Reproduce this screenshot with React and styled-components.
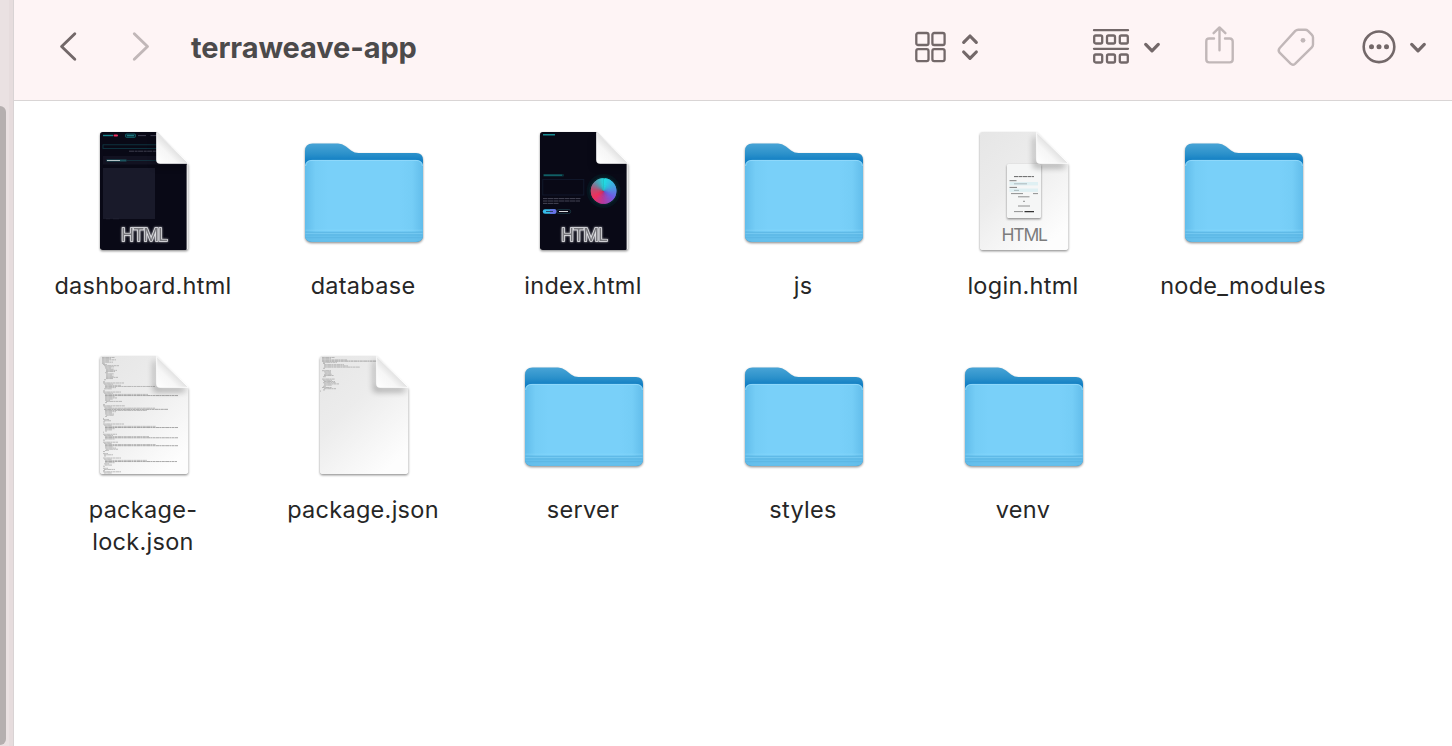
import React from "react";
import styled, { createGlobalStyle } from "styled-components";

const GlobalStyle = createGlobalStyle`
  * { box-sizing: border-box; }
  body { margin: 0; background: #fff; font-family: Inter, "Liberation Sans", sans-serif; }
`;

const Window = styled.div`
  display: flex;
  width: 100%;
  height: 746px;
  overflow: hidden;
  background: #fff;
`;

const SidebarEdge = styled.aside`
  flex: none;
  width: 14px;
  padding-top: 106px;
  background: linear-gradient(90deg, #eae1e2 0 9px, #e6dcdd 9px 13px, #d9d3d4 13px);
`;

const ScrollThumb = styled.div`
  width: 6px;
  height: 639px;
  background: #b5afaf;
  border-radius: 0 6px 6px 0;
`;

const Main = styled.main`
  flex: 1;
  min-width: 0;
  display: flex;
  flex-direction: column;
`;

const Toolbar = styled.header`
  flex: none;
  display: flex;
  align-items: center;
  height: 101px;
  padding: 0 26px 6px 43px;
  background: #fef4f5;
  border-bottom: 1px solid #d9d5d5;
`;

const ToolButton = styled.button`
  flex: none;
  display: flex;
  padding: 0;
  border: 0;
  background: none;
  margin-left: ${(p) => p.$gap || 0}px;
  color: ${(p) => (p.$disabled ? "#c1b7b8" : "#736869")};
`;

const Glyph = styled.svg`
  display: block;
  overflow: visible;
  fill: none;
  stroke: currentColor;
  stroke-width: ${(p) => p.$weight || 2.5};
  stroke-linecap: round;
  stroke-linejoin: round;
`;

const Title = styled.h1`
  flex: 1;
  margin: 1px 0 0 40px;
  font-size: 29px;
  line-height: 40px;
  font-weight: 700;
  letter-spacing: -0.1px;
  color: #4c4a4b;
`;

const Grid = styled.section`
  display: grid;
  grid-template-columns: repeat(6, 220px);
  grid-auto-rows: 224px;
  padding: 25px 0 0 19px;
`;

const Item = styled.figure`
  display: flex;
  flex-direction: column;
  align-items: center;
  margin: 0;
`;

const IconArt = styled.svg`
  display: block;
  width: 126px;
  height: 128px;
  overflow: visible;
`;

const Label = styled.figcaption`
  max-width: 190px;
  margin-top: 16px;
  font-size: 23.5px;
  line-height: 32px;
  letter-spacing: 0.28px;
  text-align: center;
  color: #262626;
`;

const Badge = styled.text`
  font-family: Inter, "Liberation Sans", sans-serif;
  font-size: 17.5px;
  fill: ${(p) => (p.$glow ? "#77777c" : "#7c7c7c")};
  stroke: ${(p) => (p.$glow ? "#e6e6ea" : "none")};
  stroke-width: 1.4px;
  paint-order: stroke;
  filter: ${(p) => (p.$glow ? "drop-shadow(0 0 1px #c8c8cc)" : "none")};
`;

const Chevron = () => (
  <Glyph width="16" height="10" $weight={3.2}>
    <path d="M1.7 2.4 8 8.8 14.3 2.4" />
  </Glyph>
);

function Defs() {
  return (
    <svg width="0" height="0" style={{ display: "block" }}>
      <defs>
        <linearGradient id="back" x1="0" y1="0" x2="0" y2="1">
          <stop offset="0" stopColor="#48a4d6" />
          <stop offset="0.1" stopColor="#2d92cb" />
          <stop offset="0.17" stopColor="#1480c4" />
          <stop offset="1" stopColor="#1480c4" />
        </linearGradient>
        <linearGradient id="front" x1="0" y1="0" x2="1" y2="0">
          <stop offset="0" stopColor="#62bdeb" />
          <stop offset="0.09" stopColor="#75cdf6" />
          <stop offset="0.2" stopColor="#79d0f9" />
          <stop offset="0.8" stopColor="#79d0f9" />
          <stop offset="0.91" stopColor="#75cdf6" />
          <stop offset="1" stopColor="#62bdeb" />
        </linearGradient>
        <linearGradient id="paper" x1="0" y1="0" x2="0.7" y2="1">
          <stop offset="0" stopColor="#e6e6e6" />
          <stop offset="0.45" stopColor="#ececec" />
          <stop offset="1" stopColor="#fdfdfd" />
        </linearGradient>
        <linearGradient id="curl" x1="0" y1="1" x2="0.55" y2="0.45">
          <stop offset="0" stopColor="#ffffff" />
          <stop offset="0.6" stopColor="#f6f6f6" />
          <stop offset="1" stopColor="#dcdcdc" />
        </linearGradient>
        <filter id="drop" x="-10%" y="-10%" width="120%" height="125%" colorInterpolationFilters="sRGB">
          <feDropShadow dx="0" dy="1.2" stdDeviation="1.3" floodColor="#000" floodOpacity="0.45" />
        </filter>
        <filter id="soft" x="-40%" y="-40%" width="180%" height="180%">
          <feGaussianBlur stdDeviation="3" />
        </filter>
        <clipPath id="sheet">
          <path d="M23 6H76.5L108 38V121.3Q108 124 105.3 124H22.7Q20 124 20 121.3V8.7Q20 6 22.7 6Z" />
        </clipPath>
      </defs>
    </svg>
  );
}

function FolderIcon() {
  return (
    <IconArt viewBox="0 0 126 128">
      <g filter="url(#drop)">
        <path fill="url(#back)" d="M5 25Q5 17.5 12.5 17.5H38Q42 17.5 46 20.5L51 24.4Q54.5 27 58.5 27H116Q123 27 123 34V108.5Q123 115.8 116 115.8H12Q5 115.8 5 108.5Z" />
        <path fill="url(#front)" d="M5 41Q5 34 12 34H116Q123 34 123 41V108.5Q123 115.8 116 115.8H12Q5 115.8 5 108.5Z" />
      </g>
      <path fill="#62bce9" d="M5 106H123V108.5Q123 115.8 116 115.8H12Q5 115.8 5 108.5Z" opacity="0.8" />
      <path stroke="#58b3e2" strokeWidth="0.9" opacity="0.8" d="M5.5 106.2H122.5M5.5 109H122.5M6 111.7H122" />
      <path stroke="#8fd9fa" strokeWidth="0.8" opacity="0.5" d="M5.5 104.2H122.5M5.5 107.4H122.5" />
      <path fill="none" stroke="#93d9fa" strokeWidth="0.9" d="M5.6 40Q6 34.4 12 34.4H116Q122 34.4 122.4 40" />
    </IconArt>
  );
}

function Sheet({ fill, dark, children }) {
  return (
    <IconArt viewBox="0 0 126 128">
      <path filter="url(#drop)" fill={dark ? "#e8e8e8" : "#f4f4f4"} d="M23 6H76.5L108.3 38V121.3Q108.3 124 105.6 124H22.7Q20 124 20 121.3V8.7Q20 6 22.7 6Z" />
      <g clipPath="url(#sheet)">
        <rect x="20" y="6" width={dark ? 86.6 : 89} height="118" fill={fill} />
        {children}
        <path d="M76 10V38H106L104 41H74V12Z" fill="#000" opacity={dark ? 0.4 : 0.5} filter="url(#soft)" />
      </g>
      <path d="M76.7 6.3 108.3 37.3H79.4Q76.7 37.3 76.7 34.6Z" fill="url(#curl)" stroke="#fff" strokeWidth="0.9" />
    </IconArt>
  );
}

function DashboardIcon() {
  return (
    <Sheet fill="#090916" dark>
      <rect x="23" y="8.8" width="10" height="1.4" fill="#17848c" />
      <rect x="33.5" y="8.4" width="4.5" height="2.2" rx="1" fill="#ee3160" />
      <rect x="45.5" y="8" width="10" height="3.4" rx="1" fill="#0b2832" stroke="#167580" strokeWidth="0.7" />
      <path d="M47 9.7h7" stroke="#2aa2ab" strokeWidth="0.8" />
      <path d="M58 9.6h8M70.5 9.6h6" stroke="#484859" strokeWidth="0.9" />
      <rect x="23" y="18.8" width="60" height="3.6" fill="none" stroke="#103c48" strokeWidth="0.8" />
      <path d="M49 25.2h28" stroke="#464657" strokeWidth="0.9" strokeDasharray="5 .6 3 .5" />
      <rect x="23" y="30" width="84" height="8.5" fill="#121221" />
      <path d="M26.5 34.5H46.5" stroke="#1a545e" strokeWidth="2" />
      <path d="M27 34.5h13" stroke="#c6d0d2" strokeWidth="0.9" />
      <path d="M47 34.5h33" stroke="#12424d" strokeWidth="0.6" />
      <rect x="23" y="42" width="52" height="51" fill="#191a2a" />
      <path d="M26 92.8h4M33 92.8h6" stroke="#292939" strokeWidth="0.6" />
      <Badge $glow x="41" y="114.7" textLength="47">HTML</Badge>
    </Sheet>
  );
}

function wheelPoint(angle) {
  const a = (angle * Math.PI) / 180;
  return `${83.6 + 12.8 * Math.sin(a)} ${65 - 12.8 * Math.cos(a)}`;
}

const wheelStops = [
  [0, [31, 222, 226]],
  [60, [66, 166, 224]],
  [120, [112, 92, 228]],
  [180, [180, 58, 158]],
  [235, [240, 48, 92]],
  [275, [190, 76, 112]],
  [315, [90, 150, 172]],
  [360, [31, 222, 226]],
];

function wheelColor(angle) {
  const i = wheelStops.findIndex(([a]) => a > angle);
  const [a0, c0] = wheelStops[i - 1];
  const [a1, c1] = wheelStops[i];
  const t = (angle - a0) / (a1 - a0);
  return `rgb(${c0.map((c, k) => Math.round(c + (c1[k] - c) * t)).join(",")})`;
}

function LandingIcon() {
  return (
    <Sheet fill="#090916" dark>
      <path d="M23 8.8h12" stroke="#178b91" strokeWidth="1.6" />
      <rect x="23" y="48" width="21" height="2.4" rx="1" fill="#0b3038" />
      <path d="M24 49.2h18" stroke="#15747b" strokeWidth="1" />
      <rect x="22.8" y="53.5" width="41" height="15.5" fill="none" stroke="#121a2d" strokeWidth="0.9" />
      <path d="M23 72.6h38M23 75h37M23 77.4h16" stroke="#4c4c5b" strokeWidth="0.9" strokeDasharray="4 .5 6 .5" />
      <rect x="22.8" y="83.3" width="13.5" height="4.4" rx="2.2" fill="#37bce9" />
      <path d="M30 83.3h4.5a2.2 2.2 0 0 1 0 4.4H30z" fill="#6a70e8" />
      <path d="M26 85.5h7" stroke="#22405b" strokeWidth="0.9" />
      <rect x="36.7" y="83.5" width="14" height="4" rx="2" fill="none" stroke="#1c3b46" strokeWidth="0.8" />
      <path d="M39 85.5h9" stroke="#d7dadd" strokeWidth="1" />
      <circle cx="83.6" cy="65" r="17" fill="#06141e" />
      <circle cx="83.6" cy="65" r="14.5" fill="#082029" />
      {Array.from({ length: 60 }, (_, i) => (
        <path
          key={i}
          fill={wheelColor(i * 6)}
          d={`M83.6 65 L${wheelPoint(i * 6)} A12.8 12.8 0 0 1 ${wheelPoint(Math.min(i * 6 + 12, 360))}Z`}
        />
      ))}
      <Badge $glow x="41" y="114.7" textLength="47">HTML</Badge>
    </Sheet>
  );
}

function LoginIcon() {
  return (
    <Sheet fill="url(#paper)">
      <g transform="translate(20 0)">
        <rect x="27" y="38" width="34" height="54" rx="1.5" fill="#f5f6f6" filter="url(#drop)" />
        <rect x="29.5" y="56" width="28.5" height="3.4" fill="#dff0f3" />
        <rect x="29.5" y="62.5" width="28.5" height="3.4" fill="#dff0f3" />
        <path d="M34 50.6h20" stroke="#666" strokeWidth="1" strokeDasharray="4 .5" />
        <path d="M29.5 54.7h7M29.5 61.4h7.5" stroke="#707070" strokeWidth="0.9" />
        <path d="M34 57.8h13M34 64.4h5" stroke="#9eabad" strokeWidth="0.8" />
        <path d="M31 67.6h12M53 67.6h5M38 70.8h11.5M43 75.3h2M38 80h12M34 85.6h9" stroke="#858585" strokeWidth="0.9" />
        <path d="M44.5 85.6h9.5" stroke="#333" strokeWidth="1.1" />
      </g>
      <Badge x="41.5" y="114.7" textLength="46.5">HTML</Badge>
    </Sheet>
  );
}

const codeBlocks = [
  [[2, 13], [2, 9], [2, 14], [2, 7], [2, 11], [2, 3], [3, 4], [4, 15], [5, 9], [5, 6], [6, 8], [6, 11], [6, 9], [5, 3], [6, 8], [6, 6], [6, 8], [6, 12], [6, 7], [4, 2]],
  [[3, 2], [3, 21], [4, 9], [5, 16], [5, 50], [5, 11], [4, 8]],
  [[3, 2], [3, 18], [4, 9], [5, 43], [5, 73], [5, 10], [5, 12], [5, 8], [5, 5], [6, 16], [5, 2]],
  [[3, 2], [3, 22], [4, 8], [5, 50], [4, 64], [5, 42], [5, 11], [5, 7], [5, 9], [6, 8], [5, 2]],
  [[3, 1], [3, 6], [4, 7], [3, 2]],
  [[3, 21], [4, 8], [5, 51], [5, 73], [5, 10], [5, 7], [5, 2], [3, 1]],
  [[3, 14], [4, 9], [5, 44], [5, 73], [5, 10], [3, 2]],
  [[3, 15], [4, 8], [5, 51], [5, 73], [5, 8], [5, 11], [6, 12], [5, 4], [3, 2]],
  [[3, 5], [4, 9], [4, 2]],
  [[3, 18], [4, 8], [5, 42], [5, 72], [5, 10], [4, 5], [5, 7], [3, 2]],
  [[3, 5], [4, 11], [3, 2], [3, 18], [4, 8]],
];

const manifestBlocks = [
  [[2, 13], [2, 9], [2, 25], [2, 66], [3, 14], [3, 2], [4, 20], [4, 24], [4, 36], [3, 2]],
  [[2, 9], [4, 7], [5, 6], [4, 8], [4, 10], [3, 3]],
  [[2, 13], [3, 9], [4, 11], [3, 13], [4, 15], [4, 8], [3, 3], [2, 10], [4, 12], [3, 2], [0, 1]],
];

function CodeLines({ blocks, step = 1.17, gap = 0.9 }) {
  let y = 7.5;
  const out = [];
  blocks.forEach((block, b) => {
    block.forEach(([indent, len], i) => {
      out.push(
        <path
          key={`${b}-${i}`}
          d={`M${20 + indent} ${y.toFixed(2)}h${len}`}
          stroke={len > 60 ? "#858585" : "#a4a4a4"}
          strokeWidth="0.7"
          strokeDasharray="2.8 .4 4 .3 1.6 .4"
        />
      );
      y += step;
    });
    y += gap;
  });
  return <g>{out}</g>;
}

const LockIcon = () => (
  <Sheet fill="url(#paper)">
    <CodeLines blocks={codeBlocks} />
  </Sheet>
);

const ManifestIcon = () => (
  <Sheet fill="url(#paper)">
    <CodeLines blocks={manifestBlocks} step={1.2} gap={1.2} />
  </Sheet>
);

const files = [
  ["dashboard.html", DashboardIcon],
  ["database", FolderIcon],
  ["index.html", LandingIcon],
  ["js", FolderIcon],
  ["login.html", LoginIcon],
  ["node_modules", FolderIcon],
  ["package-lock.json", LockIcon],
  ["package.json", ManifestIcon],
  ["server", FolderIcon],
  ["styles", FolderIcon],
  ["venv", FolderIcon],
];

export default function App() {
  return (
    <>
      <GlobalStyle />
      <Defs />
      <Window>
        <SidebarEdge>
          <ScrollThumb />
        </SidebarEdge>
        <Main>
          <Toolbar>
            <ToolButton $gap={3} aria-label="Back">
              <Glyph width="16" height="30" $weight={2.9}>
                <path d="M14.8 1.7 1.6 14.5 14.8 27.3" />
              </Glyph>
            </ToolButton>
            <ToolButton $gap={57} $disabled aria-label="Forward">
              <Glyph width="18" height="30" $weight={2.9}>
                <path d="M1.3 1.7 14.5 14.5 1.3 27.3" />
              </Glyph>
            </ToolButton>
            <Title>terraweave-app</Title>
            <ToolButton aria-label="View as icons">
              <Glyph width="31" height="31" $weight={2.3}>
                <rect x="1.3" y="1" width="12.2" height="12" rx="1.8" />
                <rect x="17.4" y="1" width="12.2" height="12" rx="1.8" />
                <rect x="1.3" y="17.1" width="12.2" height="12" rx="1.8" />
                <rect x="17.4" y="17.1" width="12.2" height="12" rx="1.8" />
              </Glyph>
            </ToolButton>
            <ToolButton $gap={15.5} aria-label="Change view">
              <Glyph width="16" height="28" $weight={3.2}>
                <path d="M1.7 9.4 8 3 14.3 9.4M1.7 19 8 25.4 14.3 19" />
              </Glyph>
            </ToolButton>
            <ToolButton $gap={115} aria-label="Group">
              <Glyph width="36" height="36" $weight={2.3}>
                <path d="M1 1.2H35M1 19.8H35" />
                {[1.2, 14, 26.8].map((x) => (
                  <g key={x}>
                    <rect x={x} y="6.5" width="8" height="8" rx="1.5" />
                    <rect x={x} y="25.5" width="8" height="8" rx="1.5" />
                  </g>
                ))}
              </Glyph>
            </ToolButton>
            <ToolButton $gap={15} aria-label="Group options">
              <Chevron />
            </ToolButton>
            <ToolButton $gap={45} $disabled aria-label="Share">
              <Glyph width="29" height="40" $weight={2.4}>
                <path d="M9 11.5H4.2Q1.3 11.5 1.3 14.4V32.5Q1.3 35.4 4.2 35.4H24.8Q27.7 35.4 27.7 32.5V14.4Q27.7 11.5 24.8 11.5H20M14.5 23.3V0.8M8.6 6.2 14.5 0.4 20.4 6.2" />
              </Glyph>
            </ToolButton>
            <ToolButton $gap={43} $disabled aria-label="Tags">
              <Glyph width="38" height="38" $weight={2.4}>
                <path d="M18.3 2.9Q19.6 1.7 21.2 1.7H28.2Q29.8 1.7 31 2.8L34.7 6.6Q36 7.9 36 9.5V16.5Q36 18.1 34.8 19.3L18 35.8Q15.8 37.8 13.6 35.7L2.6 24.6Q.7 22.4 2.7 20Z" />
                <circle cx="26" cy="12.3" r="2.4" fill="currentColor" stroke="none" />
              </Glyph>
            </ToolButton>
            <ToolButton $gap={47} aria-label="Actions">
              <Glyph width="34" height="34" $weight={2.6}>
                <circle cx="17" cy="16.8" r="15.3" />
                <g fill="currentColor" stroke="none">
                  <circle cx="9.5" cy="16.8" r="2.5" />
                  <circle cx="17" cy="16.8" r="2.5" />
                  <circle cx="24.5" cy="16.8" r="2.5" />
                </g>
              </Glyph>
            </ToolButton>
            <ToolButton $gap={14.5} aria-label="More actions">
              <Chevron />
            </ToolButton>
          </Toolbar>
          <Grid>
            {files.map(([name, Icon]) => (
              <Item key={name}>
                <Icon />
                <Label>{name}</Label>
              </Item>
            ))}
          </Grid>
        </Main>
      </Window>
    </>
  );
}
